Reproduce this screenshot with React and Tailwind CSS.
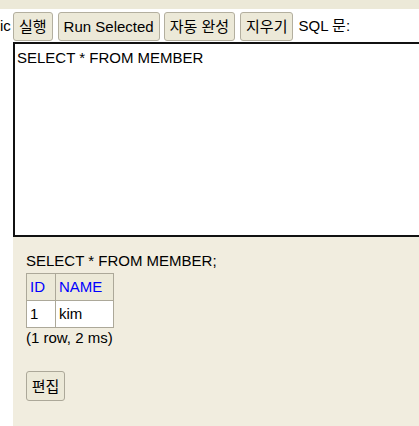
import React from 'react';

const font = { fontFamily: '"Liberation Sans", "Noto Sans CJK KR", Arial, sans-serif' };

function ToolButton({ children, className = '' }) {
  return (
    <button
      className={`h-[29px] px-[5px] border border-[#b3af9f] rounded-[3px] bg-[#ece9d8] text-[15px] text-black leading-none ${className}`}
    >
      {children}
    </button>
  );
}

export default function App() {
  return (
    <div className="w-[419px] h-[426px] bg-white overflow-hidden text-black" style={font}>
      <div className="h-[9px] bg-[#ece9d8]" />

      <div className="flex items-center mt-[3px] h-[29px] whitespace-nowrap">
        <span className="text-[15px] w-[13px]">ic</span>
        <ToolButton>실행</ToolButton>
        <ToolButton className="ml-[5px]">Run Selected</ToolButton>
        <ToolButton className="ml-[4px]">자동 완성</ToolButton>
        <ToolButton className="ml-[5px]">지우기</ToolButton>
        <span className="ml-[5px] text-[15px]">SQL 문:</span>
      </div>

      <div className="ml-[13px] mt-px w-[440px] h-[195px] border-2 border-[#111] bg-white px-[2px] pt-[5px] text-[15px] leading-[18px]">
        SELECT * FROM MEMBER
      </div>

      <div className="ml-[13px] h-[200px] bg-[#f1eddf] pl-[13px] pt-[15px] text-[15px] leading-[18px]">
        <div>SELECT * FROM MEMBER;</div>
        <table className="mt-[3px] border-collapse bg-white">
          <thead>
            <tr className="h-[27px] bg-[#ece9d8]">
              <th className="border border-[#aca899] px-[3px] text-left font-normal text-[#0000ff] w-[29px]">ID</th>
              <th className="border border-[#aca899] px-[3px] text-left font-normal text-[#0000ff] w-[58px]">NAME</th>
            </tr>
          </thead>
          <tbody>
            <tr className="h-[27px]">
              <td className="border border-[#aca899] px-[3px]">1</td>
              <td className="border border-[#aca899] px-[3px]">kim</td>
            </tr>
          </tbody>
        </table>
        <div className="mt-[1px]">(1 row, 2 ms)</div>
        <button className="mt-[24px] h-[30px] w-[39px] border border-[#aca899] rounded-[3px] bg-[#ece9d8] text-[15px] leading-none">
          편집
        </button>
      </div>
    </div>
  );
}
